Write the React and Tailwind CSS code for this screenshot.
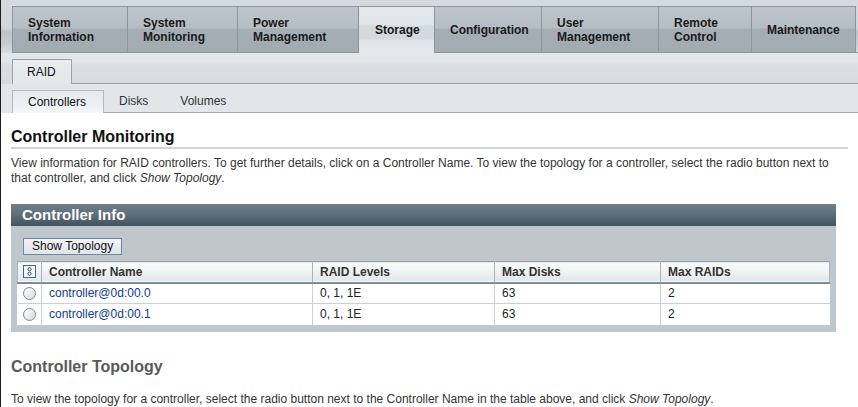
import React from "react";

const mainTabs = [
  { label: ["System", "Information"], w: "w-[115px]" },
  { label: ["System", "Monitoring"], w: "w-[110px]" },
  { label: ["Power", "Management"], w: "w-[121px]" },
  { label: ["Storage"], w: "w-[76px]", active: true },
  { label: ["Configuration"], w: "w-[107px]" },
  { label: ["User", "Management"], w: "w-[117px]" },
  { label: ["Remote", "Control"], w: "w-[93px]" },
  { label: ["Maintenance"], w: "w-[105px]", last: true },
];

const rows = [
  { name: "controller@0d:00.0", levels: "0, 1, 1E", disks: "63", raids: "2" },
  { name: "controller@0d:00.1", levels: "0, 1, 1E", disks: "63", raids: "2" },
];

function SelectAllIcon() {
  return (
    <svg width="13" height="13" viewBox="0 0 13 13" className="block mx-auto">
      <rect x="0.5" y="0.5" width="12" height="12" fill="#f4f7fa" stroke="#3d6896" />
      <circle cx="6.5" cy="4.3" r="1.6" fill="none" stroke="#2a4d75" strokeWidth="1" />
      <circle cx="6.5" cy="8.7" r="1.6" fill="none" stroke="#2a4d75" strokeWidth="1" />
    </svg>
  );
}

function Radio() {
  return (
    <span className="block mx-auto w-[13px] h-[13px] rounded-full border border-[#7d8790] bg-gradient-to-br from-[#ffffff] to-[#d4d9dd]" />
  );
}

export default function App() {
  return (
    <div className="min-h-screen bg-white border-l border-[#1d1d1d] font-['Liberation_Sans',Arial,sans-serif] text-[12px] text-[#222]">
      {/* top tabs */}
      <div className="h-[53px] pt-[6px] pl-[11px] bg-[linear-gradient(#d5dadf_0px,#d0d6db_28px,#bcc3c9_32px,#c6ccd2_44px,#d8dde1_53px)] flex">
        {mainTabs.map((t, i) => (
          <div
            key={i}
            className={`${t.w} h-[47px] flex flex-col justify-center pl-[15px] font-bold text-[12px] leading-[14px] text-[#1a1a1a] border-t border-l border-[#8c959c] ${
              t.last ? "border-r" : ""
            } ${
              t.active
                ? "bg-[linear-gradient(#e2e7eb_0px,#e0e5e9_18px,#d2d9df_19px,#d2d9df_32px,#dfe4e8_33px,#e3e7ea_47px)] pl-[16px]"
                : "border-b bg-[linear-gradient(#bdc4cb_0px,#b6bec5_21px,#a6aeb5_22px,#a3abb2_46px)]"
            }`}
          >
            {t.label.map((l) => (
              <span key={l}>{l}</span>
            ))}
          </div>
        ))}
        <div className="flex-1 h-[47px] border-b border-[#8c959c]" />
      </div>

      {/* RAID sub tab */}
      <div className="h-[31px] pl-[11px] pt-[6px] flex bg-[linear-gradient(#e2e6e9_0px,#e2e6e9_10px,#dadfe3_11px,#d5dbdf_31px)]">
        <div className="w-[60px] h-[25px] border-t border-l border-r border-[#9aa3aa] bg-[linear-gradient(#e9ecef,#e4e8eb)] flex items-center pl-[14px] text-[12px] text-[#111]">
          RAID
        </div>
        <div className="flex-1 h-[25px] border-b border-[#9aa3aa]" />
      </div>

      {/* second level tabs */}
      <div className="h-[29px] pl-[11px] pt-[6px] flex bg-[#e2e6e9]">
        <div className="w-[92px] h-[23px] border-t border-l border-r border-[#b3bac0] bg-[linear-gradient(#e6eaed,#f3f5f7)] flex items-center pl-[15px] text-[#111]">
          Controllers
        </div>
        <div className="flex-1 h-[23px] border-b border-[#a3abb1] flex items-center text-[#333]">
          <span className="ml-[15px]">Disks</span>
          <span className="ml-[32px]">Volumes</span>
        </div>
      </div>

      {/* content */}
      <div className="pl-[10px] pr-[10px]">
        <h1 className="mt-[14px] font-bold text-[16px] leading-[20px] text-[#111] border-b-2 border-[#d0d4d8]">
          Controller Monitoring
        </h1>
        <p className="mt-[7px] leading-[15px] text-[#333]">
          View information for RAID controllers. To get further details, click on a Controller Name. To view the topology for a controller, select the radio button next to
          <br />
          that controller, and click <i>Show Topology</i>.
        </p>

        <div className="mt-[18px] w-[825px]">
          <div className="h-[22px] bg-[linear-gradient(#717f89,#5d6d78_50%,#3f5361)] text-white font-bold text-[15px] leading-[22px] pl-[11px]">
            Controller Info
          </div>
          <div className="bg-[#c0c7cc] pt-[12px] pb-[7px] px-[6px]">
            <button className="block ml-[6px] h-[17px] px-[8px] border border-[#6c8aa8] bg-[linear-gradient(#f2f4f6,#e2e6e9)] text-[12px] leading-[15px] text-[#111]">
              Show Topology
            </button>
            <table className="mt-[6px] w-[813px] border-collapse bg-white text-[12px]">
              <thead>
                <tr className="h-[21px] bg-[linear-gradient(#fbfcfc,#e3e7ea)] border-t border-[#97a3ac] border-b-2 border-b-[#7d8d98]">
                  <th className="w-[24px] border-l border-r border-[#a9b2b9] p-0">
                    <SelectAllIcon />
                  </th>
                  <th className="w-[271px] text-left font-bold text-[#333] pl-[7px] border-r border-[#a9b2b9]">Controller Name</th>
                  <th className="w-[182px] text-left font-bold text-[#333] pl-[7px] border-r border-[#a9b2b9]">RAID Levels</th>
                  <th className="w-[166px] text-left font-bold text-[#333] pl-[7px] border-r border-[#a9b2b9]">Max Disks</th>
                  <th className="text-left font-bold text-[#333] pl-[7px] border-r border-[#a9b2b9]">Max RAIDs</th>
                </tr>
              </thead>
              <tbody>
                {rows.map((r, i) => (
                  <tr key={i} className={`h-[21px] ${i === 0 ? "border-b border-[#c9d0d5]" : ""}`}>
                    <td className="border-r border-[#c9d0d5] p-0">
                      <Radio />
                    </td>
                    <td className="pl-[7px] border-r border-[#c9d0d5]">
                      <a href="#" className="text-[#0f3c8c]">{r.name}</a>
                    </td>
                    <td className="pl-[7px] border-r border-[#c9d0d5] text-[#222]">{r.levels}</td>
                    <td className="pl-[7px] border-r border-[#c9d0d5] text-[#222]">{r.disks}</td>
                    <td className="pl-[7px] text-[#222]">{r.raids}</td>
                  </tr>
                ))}
              </tbody>
            </table>
          </div>
        </div>

        <h2 className="mt-[25px] font-bold text-[16px] leading-[20px] text-[#5a5a5a]">Controller Topology</h2>
        <p className="mt-[15px] leading-[15px] text-[#333]">
          To view the topology for a controller, select the radio button next to the Controller Name in the table above, and click <i>Show Topology</i>.
        </p>
      </div>
    </div>
  );
}
